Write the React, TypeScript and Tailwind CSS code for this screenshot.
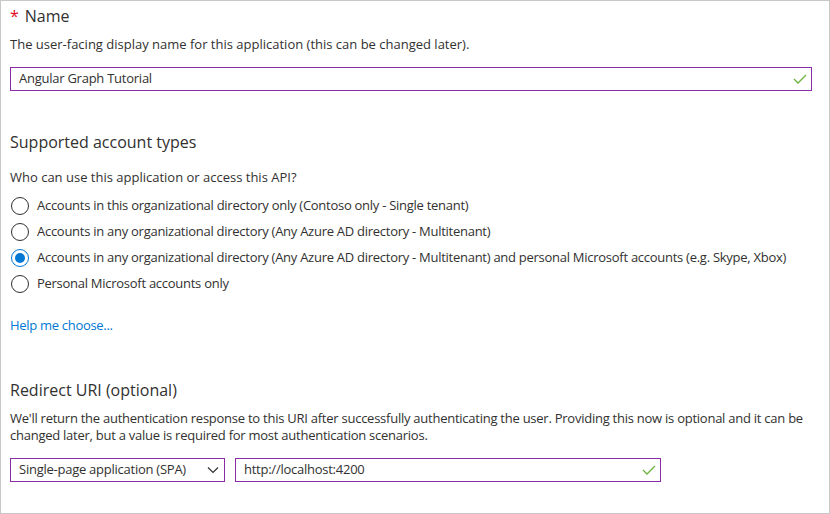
import React from "react";

const Check = () => (
  <svg width="14" height="10" viewBox="0 0 14 10" className="shrink-0">
    <path d="M1 5 L5 9 L13 1" fill="none" stroke="#6bb33e" strokeWidth="1.3" />
  </svg>
);

const Radio = ({ checked }: { checked?: boolean }) => (
  <span
    className={
      "flex h-[18px] w-[18px] shrink-0 items-center justify-center rounded-full border " +
      (checked ? "border-[#0078d4]" : "border-[#323130]")
    }
  >
    {checked && <span className="h-[10px] w-[10px] rounded-full bg-[#0078d4]" />}
  </span>
);

export default function App() {
  const options = [
    "Accounts in this organizational directory only (Contoso only - Single tenant)",
    "Accounts in any organizational directory (Any Azure AD directory - Multitenant)",
    "Accounts in any organizational directory (Any Azure AD directory - Multitenant) and personal Microsoft accounts (e.g. Skype, Xbox)",
    "Personal Microsoft accounts only",
  ];
  return (
    <div
      className="h-[514px] w-[830px] border border-[#c8c8c8] bg-white text-[13px] text-[#323130]"
      style={{ fontFamily: '"Open Sans", "Noto Sans", sans-serif' }}
    >
      <div className="px-[9px]">
        <div className="mt-[3px] flex h-[24px] items-center text-[16px]">
          <span className="mr-[6px] text-[#e00b1c]">*</span>
          <span>Name</span>
        </div>
        <div className="mt-[7px] h-[18px] leading-[18px]">
          The user-facing display name for this application (this can be changed later).
        </div>
        <div className="mt-[14px] flex h-[24px] w-[802px] items-center justify-between border border-[#8a2da5] pl-[8px] pr-[4px]">
          <span className="tracking-[-0.25px]">Angular Graph Tutorial</span>
          <Check />
        </div>

        <div className="mt-[39px] h-[24px] text-[16px] leading-[24px]">Supported account types</div>
        <div className="mt-[14px] h-[18px] leading-[18px]">Who can use this application or access this API?</div>
        <div className="mt-[7px] flex flex-col">
          {options.map((o, i) => (
            <div key={i} className="flex h-[26px] items-center gap-[8px] pl-[1px]">
              <Radio checked={i === 2} />
              <span className="whitespace-nowrap tracking-[-0.27px]">{o}</span>
            </div>
          ))}
        </div>
        <div className="mt-[19px] h-[18px] leading-[18px] tracking-[-0.3px] text-[#0078d4]">Help me choose...</div>

        <div className="mt-[44px] h-[24px] text-[16px] leading-[24px]">Redirect URI (optional)</div>
        <div className="mt-[8px] w-[800px] leading-[17px] tracking-[-0.25px]">
          We'll return the authentication response to this URI after successfully authenticating the user. Providing this now is optional and it can be changed later, but a value is required for most authentication scenarios.
        </div>
        <div className="mt-[14px] flex gap-[10px]">
          <div className="flex h-[24px] w-[215px] items-center justify-between border border-[#8a2da5] pl-[8px] pr-[5px]">
            <span className="tracking-[-0.25px]">Single-page application (SPA)</span>
            <svg width="12" height="8" viewBox="0 0 12 8">
              <path d="M1 1.5 L6 6.5 L11 1.5" fill="none" stroke="#323130" strokeWidth="1.2" />
            </svg>
          </div>
          <div className="flex h-[24px] w-[426px] items-center justify-between border border-[#8a2da5] pl-[8px] pr-[4px]">
            <span className="tracking-[-0.25px]">http://localhost:4200</span>
            <Check />
          </div>
        </div>
      </div>
    </div>
  );
}
